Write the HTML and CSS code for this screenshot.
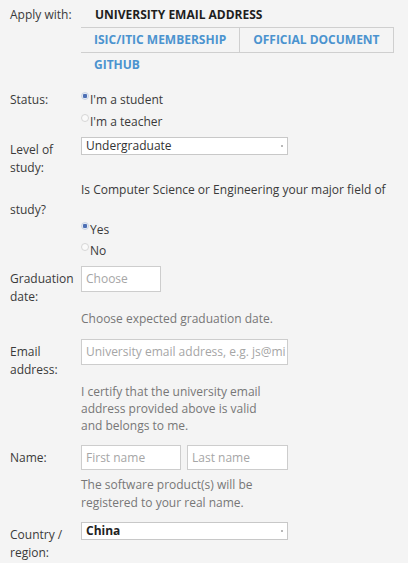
FILE: index.html
```html
<!DOCTYPE html>
<html>
<head>
<meta charset="utf-8">
<link rel="stylesheet" href="styles.css">
</head>
<body>
<form class="form">
  <div class="row row-apply">
    <div class="label label-tab">Apply with:</div>
    <div class="tabs">
      <span class="tab tab-active">UNIVERSITY EMAIL ADDRESS</span>
      <span class="tab tab-boxed tab-first">ISIC/ITIC MEMBERSHIP</span>
      <span class="tab tab-boxed">OFFICIAL DOCUMENT</span>
      <span class="tab">GITHUB</span>
    </div>
  </div>

  <div class="row row-status">
    <div class="label label-radio">Status:</div>
    <div class="radios radios-status">
      <label class="radio"><span class="dot checked"></span>I'm a student</label>
      <label class="radio"><span class="dot"></span>I'm a teacher</label>
    </div>
  </div>

  <div class="row row-level">
    <div class="label">Level of study:</div>
    <div class="field">
      <div class="select"><span>Undergraduate</span><span class="arrow"></span></div>
    </div>
  </div>

  <p class="question">Is Computer Science or Engineering your major field of<br>study?</p>
  <div class="radios radios-major">
    <label class="radio"><span class="dot checked"></span>Yes</label>
    <label class="radio"><span class="dot"></span>No</label>
  </div>

  <div class="row row-grad">
    <div class="label">Graduation date:</div>
    <div class="field">
      <div class="input input-date placeholder">Choose</div>
    </div>
  </div>
  <p class="help help-grad">Choose expected graduation date.</p>

  <div class="row row-email">
    <div class="label">Email address:</div>
    <div class="field">
      <div class="input input-wide placeholder">University email address, e.g. js@mi</div>
    </div>
  </div>
  <p class="help help-email">I certify that the university email address provided above is valid and belongs to me.</p>

  <div class="row row-name">
    <div class="label">Name:</div>
    <div class="field names">
      <div class="input input-first placeholder">First name</div>
      <div class="input input-last placeholder">Last name</div>
    </div>
  </div>
  <p class="help help-name">The software product(s) will be registered to your real name.</p>

  <div class="row row-country">
    <div class="label">Country / region:</div>
    <div class="field">
      <div class="select select-bold"><span>China</span><span class="arrow"></span></div>
    </div>
  </div>
</form>
</body>
</html>
```

FILE: styles.css
```css
html, body {
  margin: 0;
  padding: 0;
  background: #f4f4f4;
}
body {
  font-family: "Open Sans", "Liberation Sans", sans-serif;
  font-size: 12px;
  color: #3a3a3a;
  overflow: hidden;
}
.form {
  padding: 3px 0 0 10px;
  width: 408px;
  box-sizing: border-box;
}
.row {
  display: grid;
  grid-template-columns: 71px 1fr;
}
.label {
  padding-top: 4px;
  line-height: 18px;
  padding-right: 6px;
}
.label-tab { padding-top: 3px; }
.label-radio { padding-top: 0; line-height: 22px; }

.tabs {
  display: flex;
  flex-wrap: wrap;
  width: 317px;
}
.tab {
  display: block;
  padding: 3px 13px;
  line-height: 18px;
  border-top: 1px solid transparent;
  border-bottom: 1px solid transparent;
  font-weight: 700;
  color: #4b93cf;
}
.tab-active {
  color: #1e1e1e;
  border-color: transparent;
  margin-top: -1px;
  margin-bottom: -1px;
  padding-left: 14px;
}
.tab-boxed {
  border-top: 1px solid #cfcfcf;
  border-bottom: 1px solid #cfcfcf;
  border-right: 1px solid #cfcfcf;
}
.tabs .tab:last-child { margin-top: -1px; }

.row-status { margin-top: 11px; }
.radios { display: flex; flex-direction: column; }
.radios-status .radio { line-height: 22px; }
.radio {
  display: flex;
  align-items: center;
  color: #3a3a3a;
}
.dot {
  width: 8px;
  height: 8px;
  border-radius: 50%;
  border: 1px solid #d6d6d6;
  background: #fafafa;
  margin-right: 1px;
  position: relative;
  top: -4px;
  box-sizing: border-box;
}
.dot.checked {
  border-color: #c9d3e3;
  background: radial-gradient(circle, #4c6fb4 0 2px, #e8edf6 2.5px);
}

.row-level { margin-top: 4px; }
.select {
  position: relative;
  width: 207px;
  height: 18px;
  box-sizing: border-box;
  border: 1px solid #c8c8c8;
  background: #fff;
  padding-left: 4px;
  line-height: 15px;
  color: #333;
}
.select-bold { font-weight: 700; color: #222; }
.arrow {
  position: absolute;
  right: 4px;
  top: 7px;
  width: 2px;
  height: 2px;
  background: #b8b8b8;
}

.question {
  margin: 3px 0 0 0;
  text-indent: 71px;
  line-height: 20px;
  color: #3a3a3a;
  white-space: nowrap;
}
.radios-major {
  margin-left: 71px;
  margin-top: -1px;
}
.radios-major .radio { line-height: 21px; }

.row-grad { margin-top: 5px; }
.input {
  box-sizing: border-box;
  border: 1px solid #cdcdcd;
  background: #fff;
  height: 26px;
  line-height: 24px;
  padding-left: 4px;
  white-space: nowrap;
  overflow: hidden;
}
.placeholder { color: #a6a6a6; }
.input-date { width: 80px; }
.input-wide { width: 207px; }
.names { display: flex; gap: 6px; }
.input-first { width: 100px; height: 25px; line-height: 23px; }
.input-last { width: 101px; height: 25px; line-height: 23px; }

.help {
  margin: 0 0 0 71px;
  color: #777;
  line-height: 18px;
}
.help-grad { margin-top: 4px; }
.row-email { margin-top: 11px; }
.help-email { width: 185px; line-height: 17px; margin-top: 4px; }
.row-name { margin-top: 11px; }
.help-name { width: 185px; margin-top: 6px; }
.row-country { margin-top: 10px; }
```
